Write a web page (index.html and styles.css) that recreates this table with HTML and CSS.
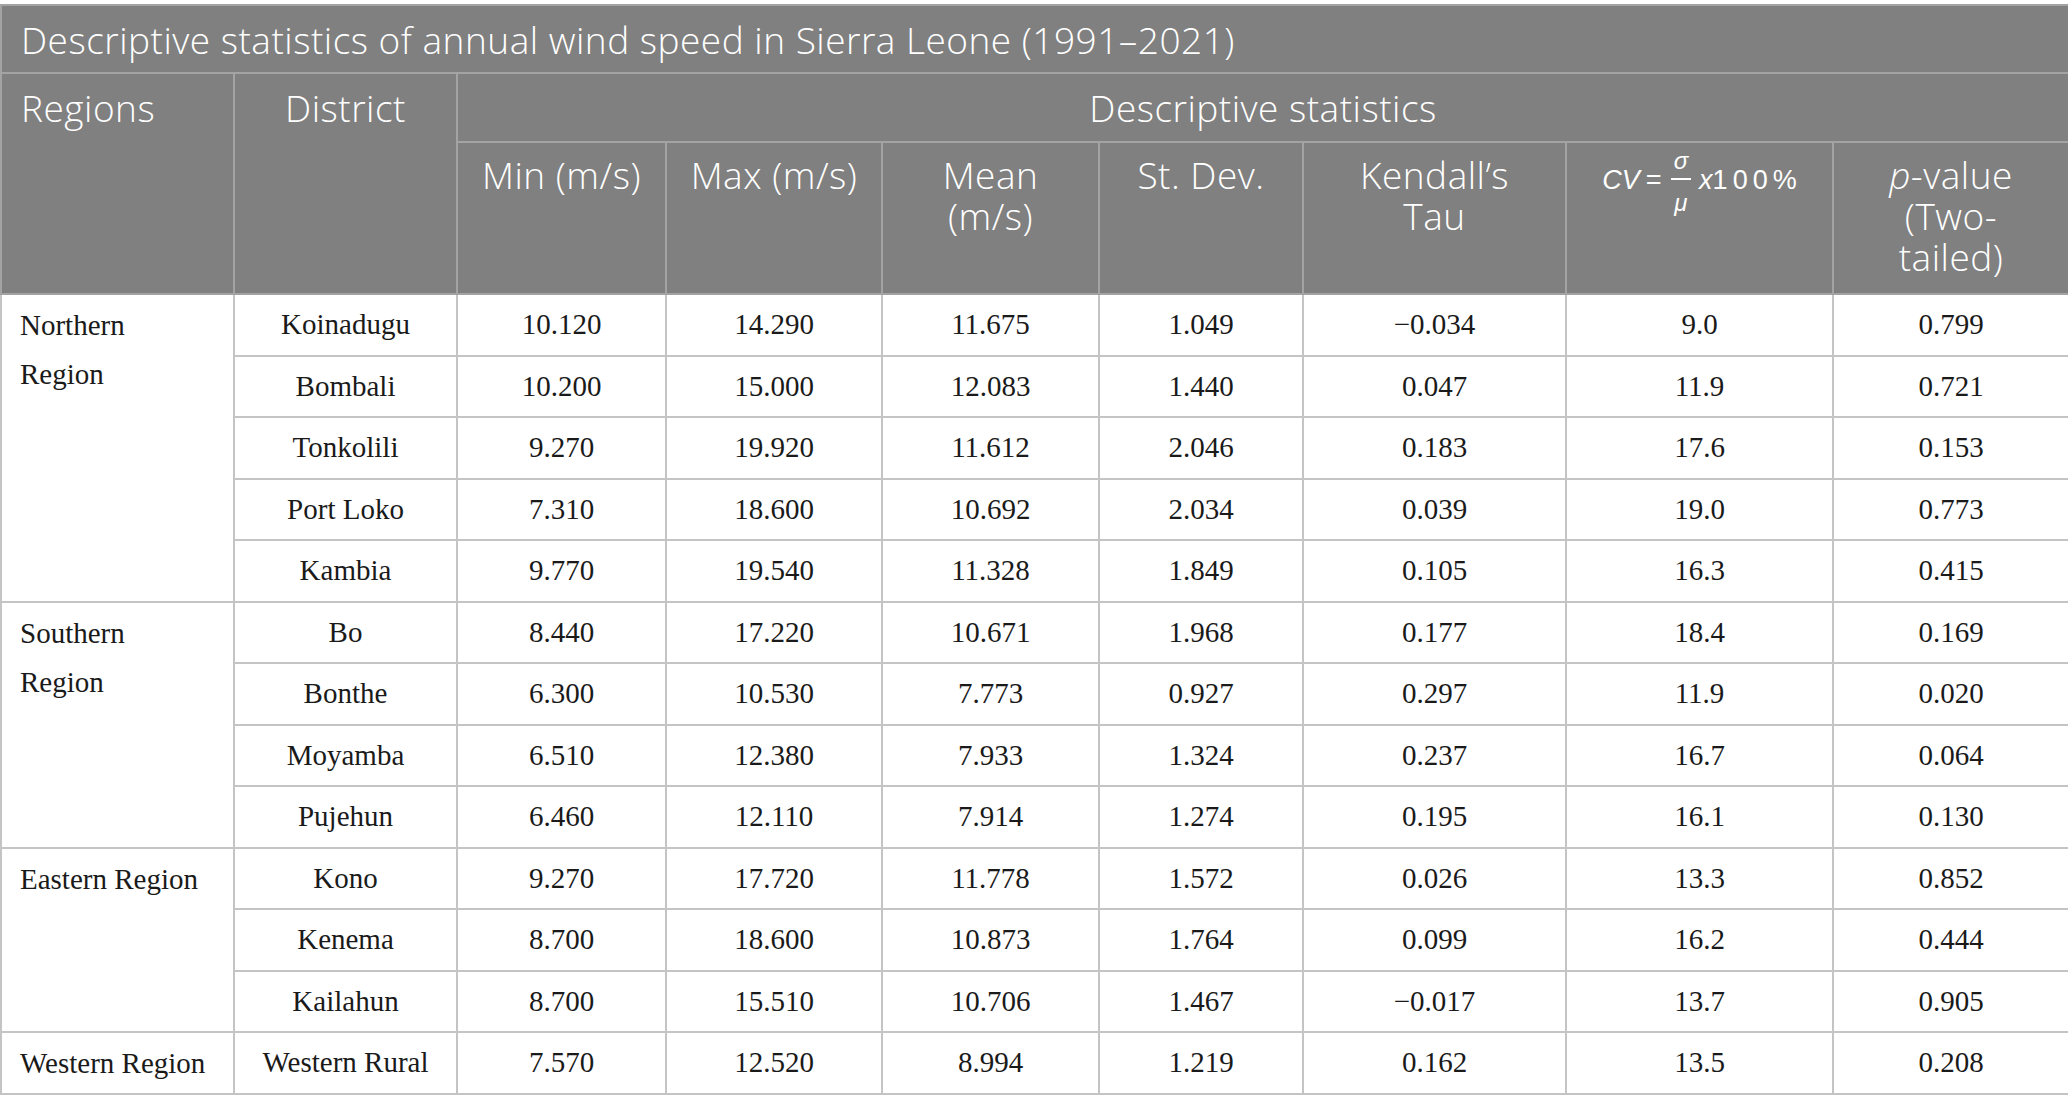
FILE: index.html
```html
<!DOCTYPE html>
<html lang="en">
<head>
<meta charset="utf-8">
<title>Descriptive statistics of annual wind speed in Sierra Leone</title>
<link rel="stylesheet" href="styles.css">
</head>
<body>
<div class="page">
<table class="stats">
  <colgroup>
    <col class="c-region"><col class="c-district"><col class="c-min"><col class="c-max"><col class="c-mean"><col class="c-sd"><col class="c-tau"><col class="c-cv"><col class="c-p">
  </colgroup>
  <thead>
    <tr class="h-title"><th colspan="9" class="left">Descriptive statistics of annual wind speed in Sierra Leone (1991–2021)</th></tr>
    <tr class="h-group">
      <th rowspan="2" class="left">Regions</th>
      <th rowspan="2">District</th>
      <th colspan="7">Descriptive statistics</th>
    </tr>
    <tr class="h-sub">
      <th>Min (m/s)</th>
      <th>Max (m/s)</th>
      <th>Mean<br>(m/s)</th>
      <th>St. Dev.</th>
      <th>Kendall’s<br>Tau</th>
      <th class="cvcell"><span class="cv"><i class="cvv">CV</i><span class="eq">=</span><span class="frac"><i class="num">σ</i><i class="den">μ</i></span><i class="x">x</i><span class="pct">100%</span></span></th>
      <th><i>p</i>-value<br>(Two-<br>tailed)</th>
    </tr>
  </thead>
  <tbody>
    <tr><td rowspan="5" class="region">Northern<br>Region</td><td>Koinadugu</td><td>10.120</td><td>14.290</td><td>11.675</td><td>1.049</td><td>−0.034</td><td>9.0</td><td>0.799</td></tr>
    <tr><td>Bombali</td><td>10.200</td><td>15.000</td><td>12.083</td><td>1.440</td><td>0.047</td><td>11.9</td><td>0.721</td></tr>
    <tr><td>Tonkolili</td><td>9.270</td><td>19.920</td><td>11.612</td><td>2.046</td><td>0.183</td><td>17.6</td><td>0.153</td></tr>
    <tr><td>Port Loko</td><td>7.310</td><td>18.600</td><td>10.692</td><td>2.034</td><td>0.039</td><td>19.0</td><td>0.773</td></tr>
    <tr><td>Kambia</td><td>9.770</td><td>19.540</td><td>11.328</td><td>1.849</td><td>0.105</td><td>16.3</td><td>0.415</td></tr>
    <tr><td rowspan="4" class="region">Southern<br>Region</td><td>Bo</td><td>8.440</td><td>17.220</td><td>10.671</td><td>1.968</td><td>0.177</td><td>18.4</td><td>0.169</td></tr>
    <tr><td>Bonthe</td><td>6.300</td><td>10.530</td><td>7.773</td><td>0.927</td><td>0.297</td><td>11.9</td><td>0.020</td></tr>
    <tr><td>Moyamba</td><td>6.510</td><td>12.380</td><td>7.933</td><td>1.324</td><td>0.237</td><td>16.7</td><td>0.064</td></tr>
    <tr><td>Pujehun</td><td>6.460</td><td>12.110</td><td>7.914</td><td>1.274</td><td>0.195</td><td>16.1</td><td>0.130</td></tr>
    <tr><td rowspan="3" class="region">Eastern Region</td><td>Kono</td><td>9.270</td><td>17.720</td><td>11.778</td><td>1.572</td><td>0.026</td><td>13.3</td><td>0.852</td></tr>
    <tr><td>Kenema</td><td>8.700</td><td>18.600</td><td>10.873</td><td>1.764</td><td>0.099</td><td>16.2</td><td>0.444</td></tr>
    <tr><td>Kailahun</td><td>8.700</td><td>15.510</td><td>10.706</td><td>1.467</td><td>−0.017</td><td>13.7</td><td>0.905</td></tr>
    <tr><td class="region">Western Region</td><td>Western Rural</td><td>7.570</td><td>12.520</td><td>8.994</td><td>1.219</td><td>0.162</td><td>13.5</td><td>0.208</td></tr>
  </tbody>
</table>
</div>
</body>
</html>
```
FILE: styles.css
```css
html, body {
  margin: 0;
  padding: 0;
  background: #ffffff;
}

.page {
  padding-top: 4px;
}

.stats {
  width: 2068px;
  table-layout: fixed;
  border-collapse: collapse;
}

.c-region { width: 233px; }
.c-district { width: 223px; }
.c-min { width: 209px; }
.c-max { width: 216px; }
.c-mean { width: 217px; }
.c-sd { width: 204px; }
.c-tau { width: 263px; }
.c-cv { width: 267px; }
.c-p { width: 236px; }

.stats th {
  background: #808080;
  color: #ffffff;
  font-family: "Open Sans", "Noto Sans", sans-serif;
  font-weight: 300;
  font-size: 37px;
  letter-spacing: 0.5px;
  line-height: 41px;
  text-align: center;
  vertical-align: top;
  border: 2px solid #a3a3a3;
  padding: 13px 6px 0 6px;
}

.stats th.left {
  text-align: left;
  padding-left: 19px;
}

.h-title { height: 68px; }
.h-group { height: 69px; }
.h-sub { height: 152px; }

.stats .h-sub th {
  padding-top: 11px;
}

.stats .h-sub th.cvcell {
  padding-top: 2px;
}

.stats td {
  font-family: "Liberation Serif", "Times New Roman", serif;
  font-size: 29px;
  color: #1a1a1a;
  text-align: center;
  vertical-align: middle;
  border: 2px solid #c4c4c4;
  padding: 0 6px;
  height: 61.5px;
  box-sizing: border-box;
}

.stats td.region {
  text-align: left;
  vertical-align: top;
  line-height: 49px;
  padding: 6px 6px 0 18px;
}

.cv {
  display: inline-flex;
  align-items: center;
  vertical-align: top;
  font-family: "Liberation Sans", Arial, sans-serif;
  font-weight: 400;
  font-size: 27px;
  letter-spacing: 0;
  line-height: 1;
}

.cvv {
  font-style: italic;
}

.eq {
  margin: 0 5px 0 6px;
}

.frac {
  display: inline-flex;
  flex-direction: column;
  align-items: center;
  margin: 0 8px 0 4px;
}

.frac .num {
  font-size: 24px;
  line-height: 24px;
  padding: 4px 3px 5px 3px;
  border-bottom: 2px solid #ffffff;
}

.frac .den {
  font-size: 24px;
  line-height: 24px;
  padding-top: 11px;
}

.x {
  font-style: italic;
}

.pct {
  letter-spacing: 5px;
  margin-right: -5px;
}
```
